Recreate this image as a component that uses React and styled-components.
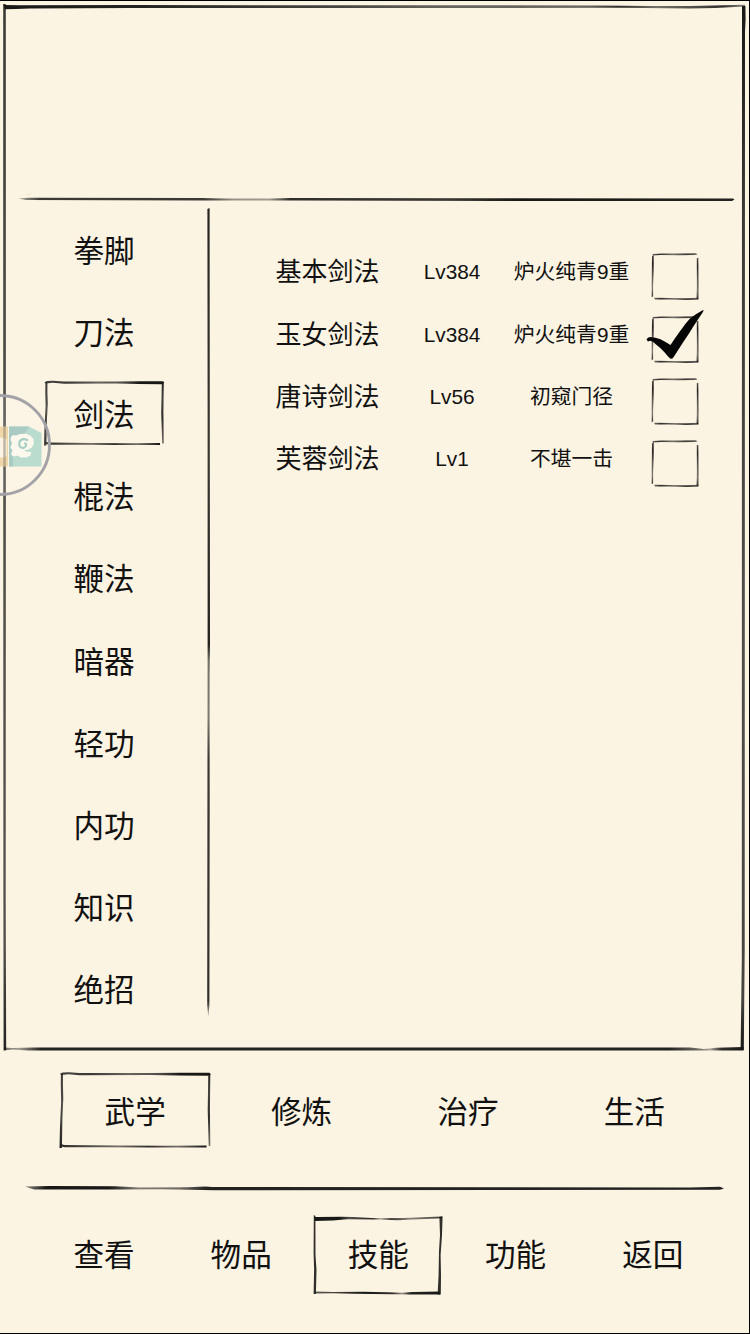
import React, { useState } from "react";
import styled, { createGlobalStyle } from "styled-components";

const GlobalStyle = createGlobalStyle`
  body {
    margin: 0;
    background: #fcf4e3;
  }
`;

const Screen = styled.div`
  box-sizing: border-box;
  position: relative;
  width: 750px;
  height: 1334px;
  overflow: hidden;
  display: flex;
  flex-direction: column;
  background: #fcf4e3;
  border: 1px solid #000;
  border-left: none;
  color: #111;
  font-family: "Liberation Sans", "Noto Sans CJK SC", sans-serif;
`;

const Panel = styled.main`
  position: relative;
  height: 1050px;
  display: flex;
  flex-direction: column;
`;

const PanelFrame = styled.svg`
  position: absolute;
  top: -1px;
  left: 0;
  pointer-events: none;
`;

const Header = styled.header`
  height: 192px;
`;

const Line = styled.svg`
  display: block;
  flex: none;
`;

const Body = styled.div`
  display: flex;
  flex: 1;
`;

const Sidebar = styled.nav`
  box-sizing: border-box;
  width: 206px;
  padding: 5px 0 0 1px;
`;

const Item = styled.button`
  position: relative;
  display: flex;
  align-items: center;
  justify-content: center;
  width: ${(props) => props.$width};
  height: ${(props) => props.$height};
  padding: 0;
  border: none;
  background: none;
  color: inherit;
  font-family: inherit;
  font-size: 30.6px;
  line-height: 40px;
  cursor: pointer;
`;

const ItemFrame = styled.svg`
  position: absolute;
  top: 50%;
  left: 50%;
  transform: translate(-50%, -50%);
  margin-top: ${(props) => props.$shift || "0px"};
  overflow: visible;
`;

const SkillList = styled.ul`
  margin: 0;
  padding: 36px 0 0 42px;
  list-style: none;
`;

const Skill = styled.li`
  display: grid;
  grid-template-columns: 149px 100px 139px 68px;
  align-items: center;
  height: 62.4px;
  text-align: center;
  white-space: nowrap;
`;

const SkillName = styled.span`
  font-size: 26px;
  line-height: 36px;
`;

const SkillInfo = styled.span`
  font-size: 20.8px;
  line-height: 30px;
`;

const CheckButton = styled.button`
  width: 68px;
  height: 62px;
  padding: 0;
  border: none;
  background: none;
  cursor: pointer;
`;

const Tabs = styled.nav`
  display: flex;
  height: 122px;
  padding-left: 52px;
`;

const BottomBar = styled.nav`
  display: flex;
  height: 104px;
  padding-left: 35.4px;
`;

const FloatingBall = styled.svg`
  position: absolute;
  left: 0;
  top: 391px;
`;

const INK = "#181816";

// gradient stroke: stops are [offset, opacity]
function Fade({ id, stops, vertical }) {
  return (
    <linearGradient id={id} x1="0" y1="0" x2={vertical ? 0 : 1} y2={vertical ? 1 : 0}>
      {stops.map(([offset, opacity]) => (
        <stop key={offset} offset={offset} stopColor={INK} stopOpacity={opacity} />
      ))}
    </linearGradient>
  );
}

function PanelBorder() {
  return (
    <PanelFrame width="749" height="1056" viewBox="0 0 749 1056">
      <defs>
        <Fade id="pTop" stops={[[0, 1], [0.18, 0.95], [0.45, 0.8], [0.6, 0.65], [0.79, 0.65], [0.83, 0.9], [0.88, 0.6], [0.93, 0.75], [0.97, 0.9], [1, 0.5]]} />
        <Fade id="pLeft" vertical stops={[[0, 0.85], [0.4, 0.75], [0.9, 0.75], [1, 0.95]]} />
        <Fade id="pRight" vertical stops={[[0, 1], [0.2, 0.85], [0.6, 0.75], [0.95, 0.8], [1, 1]]} />
        <Fade id="pBottom" stops={[[0, 0.6], [0.02, 0.4], [0.05, 0.95], [0.9, 0.95], [0.94, 0.6], [0.955, 0.35], [0.97, 0.9], [1, 1]]} />
      </defs>
      <path d="M3.5 5 L20 5.2 L130 5.1 L400 5.3 L600 5.4 L650 6 L690 6 L745 4.8 V6.4 L715 8 L690 8.4 L620 7.8 L500 8 L130 8 L30 8.4 L16 9 L5 9.2 Z" fill="url(#pTop)" />
      <path d="M3.2 4 H5.8 L5.9 400 L5.7 900 L6.2 1050 L3.6 1050.5 L3.4 900 L3.2 400 Z" fill="url(#pLeft)" />
      <path d="M742 6 L745.4 6 L745.6 20 L745 32 L744.7 950 L743.8 1050 L740.6 1050 L741.8 960 Z" fill="url(#pRight)" />
      <path d="M4 1047.6 L12 1048 L34 1047.5 L690 1047.6 L704 1049 L716 1047.7 L743.6 1047 V1050.4 L28 1050.4 L12 1049.4 L4 1050.6 Z" fill="url(#pBottom)" />
    </PanelFrame>
  );
}

// box used in the sidebar and in the tabs
function BrushFrame({ width, height, shift }) {
  const w = width;
  const h = height;
  return (
    <ItemFrame width={w} height={h} $shift={shift} aria-hidden="true">
      <defs>
        <Fade id={`bt${w}`} stops={[[0, 0.8], [0.2, 0.85], [0.45, 0.65], [0.65, 0.75], [0.8, 1], [1, 1]]} />
        <Fade id={`bl${w}`} vertical stops={[[0, 0.85], [0.4, 0.75], [1, 0.95]]} />
        <Fade id={`br${w}`} vertical stops={[[0, 0.95], [0.25, 0.8], [0.6, 0.9], [1, 0.6]]} />
        <Fade id={`bb${w}`} stops={[[0, 0.9], [0.15, 0.8], [0.4, 0.6], [0.6, 0.9], [0.8, 0.6], [1, 1]]} />
      </defs>
      <path d={`M0.4 1.8 L3 0.6 L9 0.2 L20 1 L${w * 0.6} 1 L${w * 0.8} 0.8 L${w - 1} 0.8 L${w + 0.4} 2.2 L${w - 2} 3.8 L${w * 0.78} 3.4 L${w * 0.6} 2.9 L20 3.2 L9 2.2 L1.8 3 Z`} fill={`url(#bt${w})`} />
      <path d={`M1.4 2 L3.4 2 L3.4 12 L3.8 ${h * 0.35} L2.9 ${h * 0.6} L2.4 ${h} L0 ${h} L0.4 ${h * 0.75} L1.6 ${h * 0.4} L1.3 12 Z`} fill={`url(#bl${w})`} />
      <path d={`M${w - 2.2} 2 L${w - 0.2} 2 L${w - 0.6} ${h * 0.5} L${w - 0.2} ${h - 2} L${w - 1.8} ${h - 2} L${w - 2.8} ${h * 0.5} Z`} fill={`url(#br${w})`} />
      <path d={`M1 ${h - 4} L5 ${h - 3} L${w * 0.4} ${h - 2.6} L${w * 0.7} ${h - 2.2} L${w - 4} ${h - 2.4} V${h - 0.4} L${w * 0.6} ${h - 0.4} L${w * 0.3} ${h - 0.8} L5 ${h - 0.8} L2 ${h - 1.4} Z`} fill={`url(#bb${w})`} />
    </ItemFrame>
  );
}

function NavFrame() {
  return (
    <ItemFrame width="130" height="82" viewBox="0 0 130 82" $shift="1px" aria-hidden="true">
      <defs>
        <Fade id="nTop" stops={[[0, 1], [0.2, 1], [0.28, 0.75], [0.47, 0.95], [0.52, 0.4], [0.6, 0.85], [0.75, 0.5], [1, 0.85]]} />
        <Fade id="nBottom" stops={[[0, 0.7], [0.2, 0.85], [0.4, 1], [0.62, 0.9], [0.7, 0.45], [0.76, 0.95], [1, 1]]} />
      </defs>
      <path d="M1 2 L5 2 L28 1.8 L40 2 L63 3.2 L90 3 L129 1.4 V3.2 L100 4.4 L85 5.2 L66 4.4 L34 4.2 L20 5.4 L2 6 Z" fill="url(#nTop)" />
      <path d="M0.8 0 L2.4 1 L2.5 40 L3.5 55 L2.9 79 L0.6 79 L1.1 55 L0.6 38 Z" fill={INK} fillOpacity="0.9" />
      <path d="M126.4 2 L129.6 1.2 L129 20 L127.6 40 L128 60 L127.8 79.6 L124.6 79.6 L125.6 60 L126 36 L127 20 Z" fill={INK} fillOpacity="0.9" />
      <path d="M2 76.6 L20 77 L50 76.8 L75 77.2 L88 77.8 L100 77 L127 76.6 V79.6 L96 79.6 L80 79.2 L40 78.8 L20 78.2 L2 78.4 Z" fill="url(#nBottom)" />
    </ItemFrame>
  );
}

function Checkbox({ index, checked, onClick }) {
  const inkV = `cv${index}`;
  const inkH = `ch${index}`;
  return (
    <CheckButton onClick={onClick} aria-pressed={checked}>
      <Line width="68" height="62" viewBox="0.5 0.8 68 62">
        <defs>
          <Fade id={inkV} vertical stops={[[0, 0.75], [0.2, 0.95], [0.5, 0.7], [0.8, 0.55], [1, 0.9]]} />
          <Fade id={inkH} stops={[[0, 0.6], [0.15, 0.9], [0.45, 0.6], [0.75, 0.85], [1, 0.65]]} />
        </defs>
        <path d="M11.8 13.8 L22 13.3 L40 13.4 L55.5 13 L57 14.2 L54 14.9 L38 15 L20 14.9 L12.5 15.2 Z" fill={`url(#${inkH})`} />
        <path d="M11.5 16 L13.3 14.8 L13.2 30 L12.6 45 L12.6 56 L11.2 57 L11.2 44 Z" fill={`url(#${inkV})`} />
        <path d="M56.3 18 L57.8 17.5 L58 35 L58.2 48 L57.9 58.5 L56.1 58.8 L56.4 44 Z" fill={`url(#${inkV})`} />
        <path d="M13.5 57.6 L30 57.8 L46 58.1 L58 57.6 L58 59.5 L45 59.8 L28 59.3 L14.5 59.2 Z" fill={`url(#${inkH})`} />
        {checked && (
          <path
            d="M6 36.4 L7.4 34.6 L9.5 33.9 L15 34.5 L20 36 L25 38.8 L30 41.8 L34.5 35 L39.5 28 L45 20.5 L49.5 15.4 L55 11.2 L63 6.6 L62.6 8.6 L59.6 13 L53 23 L48 31 L42.8 38.8 L37.5 47 L33.2 53.8 L31.6 55.5 L29.6 55.2 L27.6 53.4 L23.5 48.6 L19.5 44.6 L15.5 41.4 L12.5 38.6 L9.5 37.6 L7.5 38.2 Z"
            fill="#050505"
          />
        )}
      </Line>
    </CheckButton>
  );
}

function Ball() {
  return (
    <FloatingBall width="56" height="108" viewBox="0 0 56 108">
      <circle cx="0" cy="53" r="49.5" fill="#fff" fillOpacity="0.12" stroke="#a3a3a7" strokeWidth="2.9" />
      <rect x="0" y="34.5" width="8" height="40" fill="#f0d7aa" />
      <path d="M0 46 L4 45.4 L6.6 47.5 V63 L4 65.4 H0 Z" fill="#fbf3e4" />
      <rect x="3.3" y="34.5" width="2.4" height="40" fill="#8a8270" fillOpacity="0.55" />
      <path d="M9 34.5 H29 L41.5 41 V74.5 H9 Z" fill="#b9dccf" />
      <path d="M9 34.5 H29 L23 44 L13 52 V74.5 H9 Z" fill="#a9cbc3" />
      <path
        d="M11 45 L13 43 L16 43.4 L20 42 L26 41.8 L30.5 43.4 L33.4 47 L33.8 51.5 L32 55.4 L28.4 57.6 L24.4 58 L26.4 59.8 L31.4 60 L30.4 63.4 L26.4 65.4 L21 65.4 L17.4 63.6 L13.6 64.6 L11 62.6 L12.4 58.6 L10.4 55.4 L12 51 L10.6 48 Z"
        fill="#fcf8ee"
      />
      <path d="M28 48.6 C25.4 46.2 20.6 46.6 19.4 50.2 C18.4 53.8 20.6 56.6 24 55.8 C26.6 55 26.8 51.4 24.2 51" fill="none" stroke="#a8cfc4" strokeWidth="2.2" />
    </FloatingBall>
  );
}

const categories = ["拳脚", "刀法", "剑法", "棍法", "鞭法", "暗器", "轻功", "内功", "知识", "绝招"];

const skills = [
  { name: "基本剑法", level: 384, rank: "炉火纯青9重" },
  { name: "玉女剑法", level: 384, rank: "炉火纯青9重" },
  { name: "唐诗剑法", level: 56, rank: "初窥门径" },
  { name: "芙蓉剑法", level: 1, rank: "不堪一击" },
];

const tabs = ["武学", "修炼", "治疗", "生活"];
const menus = ["查看", "物品", "技能", "功能", "返回"];

export default function App() {
  const [category, setCategory] = useState("剑法");
  const [equipped, setEquipped] = useState("玉女剑法");
  const [tab, setTab] = useState("武学");
  const [menu, setMenu] = useState("技能");

  return (
    <>
      <GlobalStyle />
      <Screen>
        <Panel>
          <PanelBorder />
          <Header />
          <Line width="749" height="12" viewBox="0 0 749 12">
            <defs>
              <Fade id="rule1" stops={[[0, 0.3], [0.03, 0.85], [0.26, 0.85], [0.3, 0.45], [0.35, 0.4], [0.38, 0.9], [0.6, 0.85], [0.7, 1], [1, 0.95]]} />
            </defs>
            <path d="M18 5.4 L28 4.8 L200 5 L226 5.4 L270 5.4 L290 5 L480 5.2 L733 5.4 L734.5 6.6 L732 7.9 L500 7.9 L300 7.6 L230 7.6 L200 7.4 L26 7 Z" fill="url(#rule1)" />
            <path d="M26 1.4 L31 1.2" stroke="#efe6d5" />
          </Line>
          <Body>
            <Sidebar>
              {categories.map((name) => (
                <Item key={name} $width="206px" $height="82.1px" onClick={() => setCategory(name)}>
                  {category === name && <BrushFrame width={120} height={65} shift="-2px" />}
                  {name}
                </Item>
              ))}
            </Sidebar>
            <Line width="5" height="816" viewBox="0 0 5 816">
              <defs>
                <Fade id="divider" vertical stops={[[0, 0.95], [0.3, 0.85], [0.54, 0.95], [0.56, 0.6], [0.63, 0.55], [0.68, 0.85], [0.98, 0.9], [1, 0.3]]} />
              </defs>
              <path d="M1.4 4 L3.6 3 L3.8 200 L4 440 L3.6 470 L3.6 520 L3.7 600 L3.4 800 L2.2 812 L1.2 800 L1.4 600 L1.6 460 L1.6 200 Z" fill="url(#divider)" />
            </Line>
            <SkillList>
              {skills.map((skill, i) => (
                <Skill key={skill.name}>
                  <SkillName>{skill.name}</SkillName>
                  <SkillInfo>Lv{skill.level}</SkillInfo>
                  <SkillInfo>{skill.rank}</SkillInfo>
                  <Checkbox
                    index={i}
                    checked={equipped === skill.name}
                    onClick={() => setEquipped(skill.name)}
                  />
                </Skill>
              ))}
            </SkillList>
          </Body>
        </Panel>
        <Tabs>
          {tabs.map((name) => (
            <Item key={name} $width="166.4px" $height="122px" onClick={() => setTab(name)}>
              {tab === name && <BrushFrame width={151} height={76} shift="-2px" />}
              {name}
            </Item>
          ))}
        </Tabs>
        <Line width="749" height="30" viewBox="0 0 749 30">
          <defs>
            <Fade id="rule2" stops={[[0, 0.5], [0.03, 1], [0.12, 1], [0.16, 0.55], [0.22, 0.6], [0.26, 0.95], [0.8, 0.95], [1, 0.95]]} />
          </defs>
          <path d="M25 13.4 L50 13 L115 13.2 L140 14.4 L188 14.2 L205 13.4 L212 14 L690 14.4 L720 13.8 L724 15.4 L720 16.8 L500 17 L215 17.2 L160 16.2 L120 16.4 L34 16.6 Z" fill="url(#rule2)" />
        </Line>
        <BottomBar>
          {menus.map((name) => (
            <Item key={name} $width="137.2px" $height="104px" onClick={() => setMenu(name)}>
              {menu === name && <NavFrame />}
              {name}
            </Item>
          ))}
        </BottomBar>
        <Ball />
      </Screen>
    </>
  );
}
